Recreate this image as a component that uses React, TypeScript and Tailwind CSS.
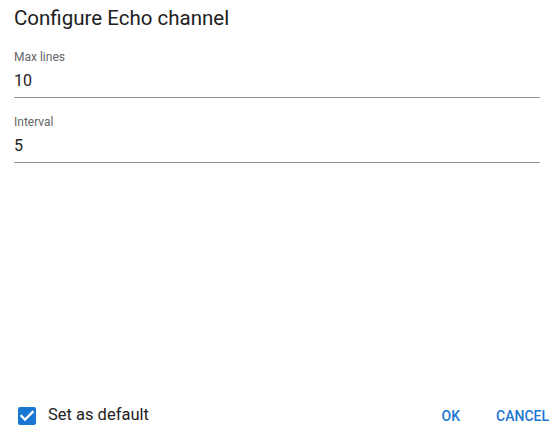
import React from "react";

function Field({ label, value }: { label: string; value: string }) {
  return (
    <div className="flex flex-col border-b border-[#949494] pb-[4px]">
      <div className="text-[12px] leading-[16px] text-[#666666]">{label}</div>
      <div className="mt-[4px] text-[16px] leading-[24px] text-[#212121]">{value}</div>
    </div>
  );
}

export default function App() {
  return (
    <div
      className="flex h-[436px] w-[558px] flex-col bg-white"
      style={{ fontFamily: "Roboto, 'Noto Sans', Arial, sans-serif" }}
    >
      <div className="flex flex-1 flex-col pl-[14px] pr-[18px]">
        <div className="pt-[4px] text-[20.5px] leading-[28px] text-[#212121]">Configure Echo channel</div>
        <div className="mt-[17px] flex flex-col gap-[16px]">
          <Field label="Max lines" value="10" />
          <Field label="Interval" value="5" />
        </div>
      </div>
      <div className="mb-[3px] flex h-[36px] items-center justify-between pl-[15px] pr-[9px]">
        <div className="flex items-center gap-[9px]">
          <svg width="24" height="24" viewBox="0 0 24 24" className="mt-[2px] block">
            <path
              fill="#1976d2"
              d="M19 3H5c-1.11 0-2 .9-2 2v14c0 1.1.89 2 2 2h14c1.11 0 2-.9 2-2V5c0-1.1-.89-2-2-2zm-9 14l-5-5 1.41-1.41L10 14.17l7.59-7.59L19 8l-9 9z"
            />
            <path fill="#ffffff" d="M10 17l-5-5 1.41-1.41L10 14.17l7.59-7.59L19 8l-9 9z" />
          </svg>
          <span className="text-[16.5px] leading-[24px] text-[#212121]">Set as default</span>
        </div>
        <div className="flex items-center gap-[36px] pt-[2px]">
          <button className="text-[14px] font-medium uppercase leading-[24px] text-[#1976d2]">OK</button>
          <button className="text-[14px] font-medium uppercase leading-[24px] text-[#1976d2]">Cancel</button>
        </div>
      </div>
    </div>
  );
}
